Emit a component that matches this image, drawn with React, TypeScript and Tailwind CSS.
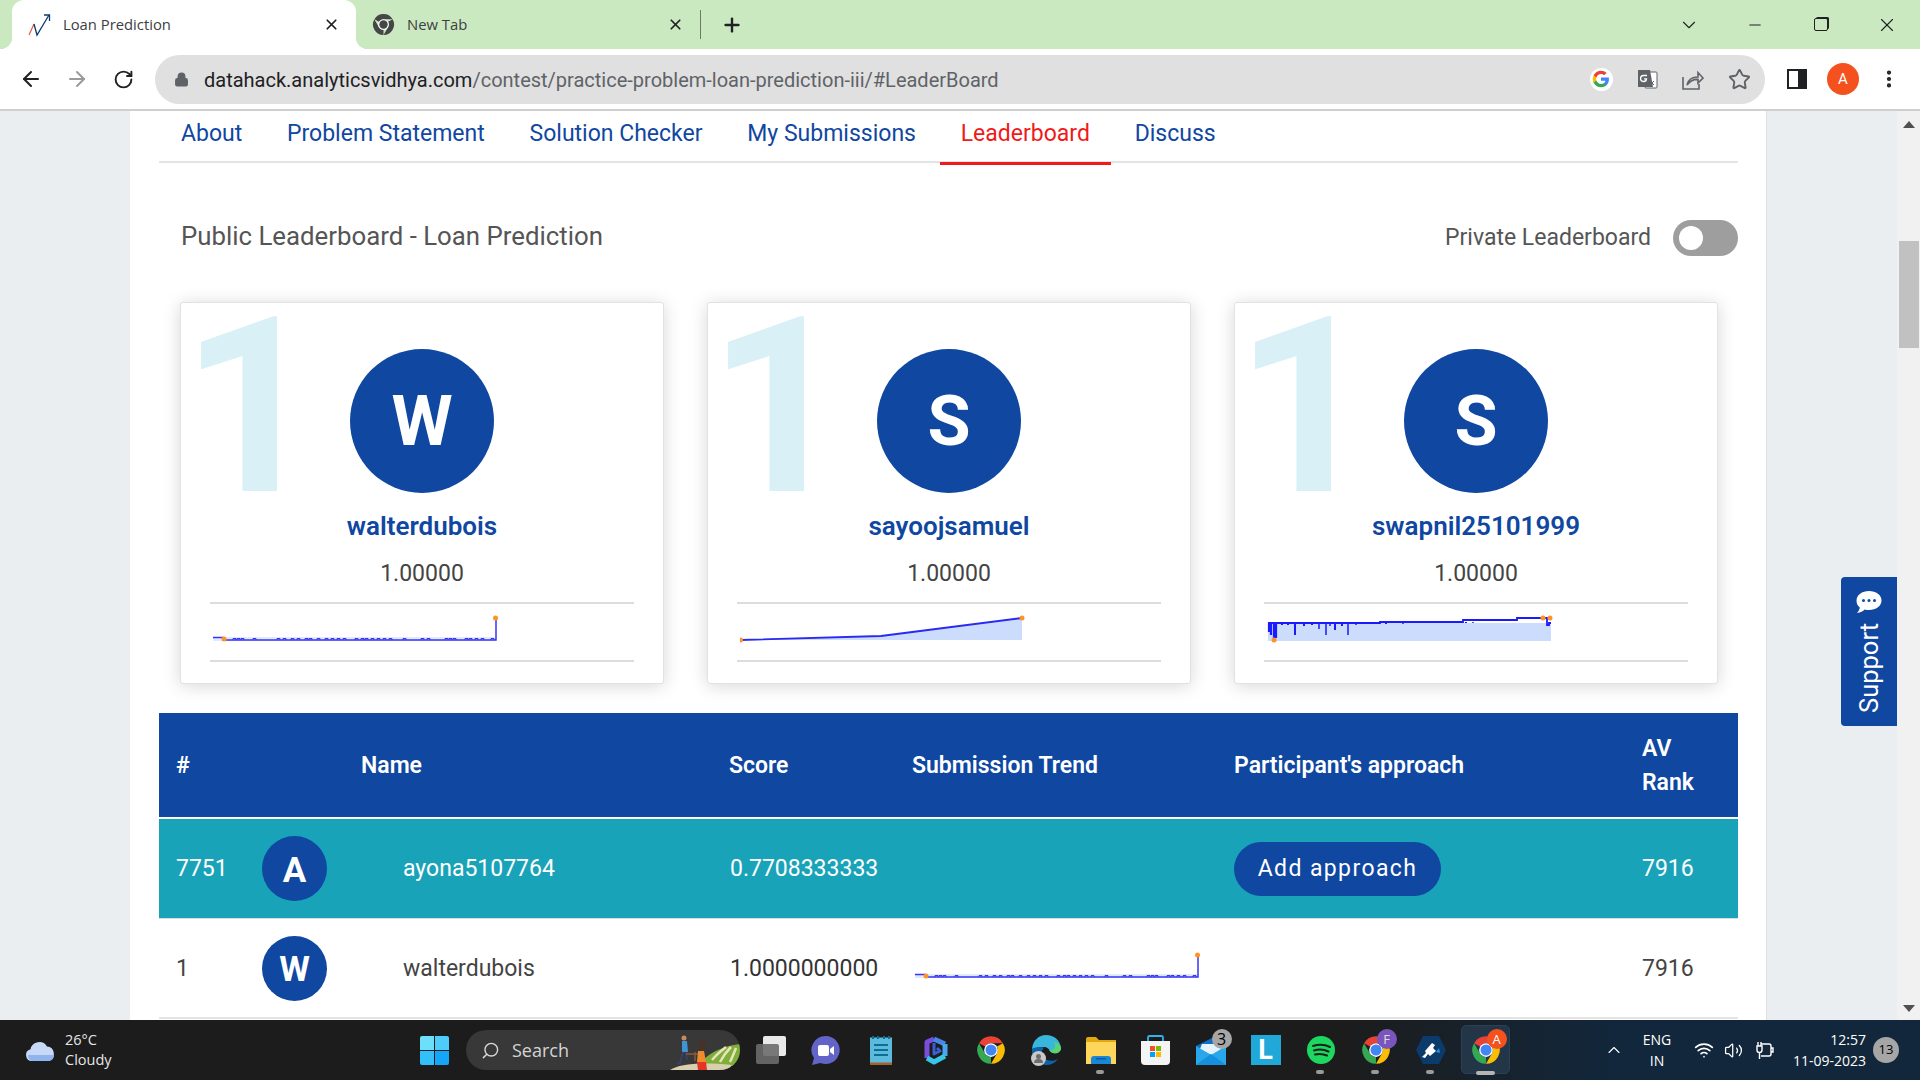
import { ReactNode } from "react";
import {
  ArrowLeft,
  ArrowRight,
  ChevronDown,
  ChevronUp,
  EllipsisVertical,
  Lock,
  Minus,
  Plus,
  RotateCw,
  Search,
  Star,
  Volume2,
  Wifi,
  X,
} from "lucide-react";

const TABS = ["About", "Problem Statement", "Solution Checker", "My Submissions", "Leaderboard", "Discuss"];
const COLS = "grid-cols-[86px_99px_368px_182px_322px_409px_113px]";

const WALTER_TICKS = [20, 24, 28, 40, 64, 70, 78, 84, 92, 96, 104, 112, 118, 124, 130, 142, 148, 152, 158, 164, 170, 176, 190, 208, 214, 232, 236, 240, 252, 256, 262, 268, 278];
const SWAPNIL_SPIKES: [number, number, number][] = [
  [27, 22, 2], [51, 16, 1.5], [58, 22, 1.5], [67, 17, 2], [80, 22, 1.5],
  [14, 12, 2], [20, 12, 2], [36, 13, 2], [44, 12, 2], [62, 13, 1.5], [74, 13, 2], [88, 12, 1.5], [118, 11, 2], [135, 11, 1.5], [198, 9, 2], [205, 9, 1.5],
];

function ChromeLogo({ size = 30, mono }: { size?: number; mono?: string }) {
  const red = "M24 2A22 22 0 0 1 43.05 13H24A11 11 0 0 0 14.47 18.5L4.95 13A22 22 0 0 1 24 2Z";
  return (
    <svg width={size} height={size} viewBox="0 0 48 48">
      <path d={red} fill={mono ?? "#ea4335"} />
      <path d={red} fill={mono ?? "#fbbc04"} transform="rotate(120 24 24)" />
      <path d={red} fill={mono ?? "#34a853"} transform="rotate(240 24 24)" />
      <circle cx="24" cy="24" r="11" fill="#fff" />
      <circle cx="24" cy="24" r="8.8" fill={mono ?? "#4285f4"} />
    </svg>
  );
}

function GoogleG() {
  return (
    <div className="flex h-[23px] w-[23px] items-center justify-center rounded-full bg-white">
      <svg width="18" height="18" viewBox="0 0 24 24">
        <path fill="#4285f4" d="M22.56 12.25c0-.78-.07-1.53-.2-2.25H12v4.26h5.92c-.26 1.37-1.04 2.53-2.21 3.31v2.77h3.57c2.08-1.92 3.28-4.74 3.28-8.09z" />
        <path fill="#34a853" d="M12 23c2.97 0 5.46-.98 7.28-2.66l-3.57-2.77c-.98.66-2.23 1.06-3.71 1.06-2.86 0-5.29-1.93-6.16-4.53H2.18v2.84C3.99 20.53 7.7 23 12 23z" />
        <path fill="#fbbc05" d="M5.84 14.09c-.22-.66-.35-1.36-.35-2.09s.13-1.43.35-2.09V7.07H2.18C1.43 8.55 1 10.22 1 12s.43 3.45 1.18 4.93l2.85-2.22.81-.62z" />
        <path fill="#ea4335" d="M12 5.38c1.62 0 3.06.56 4.21 1.64l3.15-3.15C17.45 2.09 14.97 1 12 1 7.7 1 3.99 3.47 2.18 7.07l3.66 2.84c.87-2.6 3.3-4.53 6.16-4.53z" />
      </svg>
    </div>
  );
}

function TranslateIcon() {
  return (
    <svg width="21" height="21" viewBox="0 0 21 21">
      <rect x="8" y="3" width="12" height="16" rx="1" fill="#fff" stroke="#5f6368" strokeWidth="1" />
      <path d="M1 1h12l3 17H1z" fill="#5f6368" />
      <path d="M10 6.5H6.5a3 3 0 1 0 3 3.4H7" fill="none" stroke="#fff" strokeWidth="1.3" />
      <path d="M13 12l4 4m0-4l-4 4" stroke="#5f6368" strokeWidth="1" />
    </svg>
  );
}

function ShareIcon() {
  return (
    <svg width="22" height="21" viewBox="0 0 22 21" fill="none" stroke="#5f6368" strokeWidth="1.6">
      <path d="M1 8v12h16v-5" />
      <path d="M5 16c1-5 5-8 11-8V3.5L21 9l-5 5v-3.6c-5-.3-8 1.6-11 5.6z" />
    </svg>
  );
}

function TrendLogo() {
  return (
    <svg width="24" height="24" viewBox="0 0 24 24" fill="none">
      <path d="M1 22L6 11" stroke="#e8573f" strokeWidth="1.2" />
      <path d="M6 11L9 22L21 2" stroke="#0f3a6e" strokeWidth="1.3" />
      <path d="M16 2h5.5V8" stroke="#0f3a6e" strokeWidth="1.3" />
    </svg>
  );
}

function WalterChart() {
  return (
    <svg width="286" height="36" viewBox="0 0 286 36" className="block">
      <rect x="0" y="24" width="283" height="4" fill="#cbdcfd" opacity="0.6" />
      <path d="M0 24.5H10V27H283V5" fill="none" stroke="#3b35f2" strokeWidth="1.5" />
      {WALTER_TICKS.map((x) => (
        <path key={x} d={`M${x} 27v-1.5h3v1.5`} fill="none" stroke="#3b35f2" strokeWidth="1" />
      ))}
      <circle cx="11" cy="26" r="2.5" fill="#ff9323" />
      <circle cx="282.5" cy="5" r="2.5" fill="#ff9323" />
    </svg>
  );
}

function SamuelChart() {
  return (
    <svg width="286" height="36" viewBox="0 0 286 36" className="block">
      <path d="M0 27L141 23L282 5V27Z" fill="#cbdcfd" />
      <path d="M0 27L141 23L282 5" fill="none" stroke="#2a2af0" strokeWidth="1.8" />
      <circle cx="0.5" cy="27" r="2.5" fill="#ff9323" />
      <circle cx="282" cy="5" r="2.5" fill="#ff9323" />
    </svg>
  );
}

function SwapnilChart() {
  return (
    <svg width="286" height="36" viewBox="-1 0 286 36" className="block">
      <rect x="0" y="10" width="283" height="18" fill="#cbdcfd" />
      <path d="M0 10H112V9H195V7H249V5H279V12H281V10H283" fill="none" stroke="#1a1aff" strokeWidth="1.8" />
      <path d="M1 10V19M3 10V22M6 10V26M8 10V25" stroke="#1a1aff" strokeWidth="2.2" />
      {SWAPNIL_SPIKES.map(([x, y, w]) => (
        <path key={x} d={`M${x} 10V${y}`} stroke="#1a1aff" strokeWidth={w} />
      ))}
      <circle cx="6" cy="27" r="2.5" fill="#ff9323" />
      <circle cx="275" cy="5" r="2.5" fill="#ff9323" />
      <circle cx="282" cy="5" r="2.5" fill="#ff9323" />
    </svg>
  );
}

function PodiumCard({ initial, name, chart }: { initial: string; name: string; chart: ReactNode }) {
  return (
    <div className="relative flex h-[382px] w-[484px] flex-col items-center rounded-[3px] border border-[#e2e2e2] bg-white pt-[46px] shadow-[0_2px_18px_rgba(0,0,0,0.16)]">
      <span className="absolute left-0 top-[10px] text-[245px] font-bold leading-[190px] text-[#d9f0f7]">1</span>
      <div className="relative flex h-[144px] w-[144px] items-center justify-center rounded-full bg-[#0f47a1] text-[70px] font-bold leading-none text-white">
        {initial}
      </div>
      <div className="mt-[18px] text-[26px] font-semibold leading-[30px] text-[#0f47a1]">{name}</div>
      <div className="mt-[19px] text-[23px] leading-[28px] text-[#444]">1.00000</div>
      <div className="mt-[14px] h-[60px] w-[424px] border-y-2 border-[#dcdcdc] pl-[3px] pt-[9px]">{chart}</div>
    </div>
  );
}

function Avatar({ letter }: { letter: string }) {
  return (
    <div className="flex h-[65px] w-[65px] items-center justify-center rounded-full bg-[#0f47a1] pt-[3px] text-[35px] font-bold leading-none text-white">
      {letter}
    </div>
  );
}

function TaskSlot({ children, dot, active }: { children: ReactNode; dot?: boolean; active?: boolean }) {
  return (
    <div className="relative flex h-[60px] w-[55px] items-center justify-center">
      {active && <div className="absolute left-[3px] top-[5px] h-[49px] w-[49px] rounded-[5px] border border-[#2c4054] bg-[#233648]" />}
      <div className="relative flex items-center justify-center">{children}</div>
      {dot && <div className="absolute bottom-[6px] left-[23px] h-[4px] w-[8px] rounded-full bg-[#9a9a9a]" />}
      {active && <div className="absolute bottom-[5px] left-[18px] h-[4px] w-[19px] rounded-full bg-[#b5b5b5]" />}
    </div>
  );
}

function Badge({ label, className }: { label: string; className: string }) {
  return (
    <div className={`absolute right-[-6px] top-[-6px] flex h-[20px] w-[20px] items-center justify-center rounded-full leading-none ${className}`}>
      {label}
    </div>
  );
}

function Taskbar() {
  return (
    <div className="flex h-[60px] shrink-0 items-center bg-[linear-gradient(90deg,#1c1c1c_0%,#1c1c1c_70%,#12273b_84%,#12273b_100%)] font-['Open_Sans',sans-serif] text-white">
      <div className="flex w-[420px] items-center gap-[9px] pl-[25px]">
        <svg width="31" height="24" viewBox="0 0 31 24">
          <path d="M7 23a6 6 0 0 1-1.5-11.8A9 9 0 0 1 22 8.5a7.5 7.5 0 0 1 2 14.5z" fill="#c7d9f7" />
          <path d="M3 17h26a6 6 0 0 1-5 6H7a6 6 0 0 1-4-6z" fill="#8fb4ee" />
        </svg>
        <div className="text-[14.5px] leading-[20px] text-[#e6e6e6]">
          <div>26°C</div>
          <div>Cloudy</div>
        </div>
      </div>
      <div className="grid h-[29px] w-[29px] grid-cols-2 gap-[1px]">
        <div className="rounded-tl-[2px] bg-[#6ce0fb]" />
        <div className="rounded-tr-[2px] bg-[#4fcdfa]" />
        <div className="rounded-bl-[2px] bg-[#32bffa]" />
        <div className="rounded-br-[2px] bg-[#16a6f8]" />
      </div>
      <div className="relative ml-[17px] flex h-[40px] w-[274px] items-center overflow-hidden rounded-full bg-[#383838] pl-[15px]">
        <Search size={19} strokeWidth={1.8} className="-scale-x-100 text-[#d8d8d8]" />
        <span className="ml-[12px] text-[18px] text-[#d4d4d4]">Search</span>
        <svg width="72" height="40" viewBox="0 0 72 40" className="absolute right-0 top-0">
          <path d="M30 36C38 24 54 16 72 14V36Z" fill="#7fae3c" />
          <path d="M44 30c5-6 9-9 14-13M52 32c3-6 7-11 11-15M62 32c2-4 4-9 6-14" stroke="#e7e4b8" strokeWidth="2.5" fill="none" />
          <path d="M2 40C12 34 30 32 64 35L60 40Z" fill="#d8cfae" />
          <circle cx="16" cy="8" r="2.5" fill="#c98a5c" />
          <path d="M14 11h5l1 11h-6z" fill="#3d94d6" />
          <path d="M15 22l-3 11-3 1M18 22l1 8" stroke="#3b3f6b" strokeWidth="2" fill="none" />
          <path d="M18 24l12 0M27 22v9" stroke="#8a5a3c" strokeWidth="1.5" />
          <circle cx="34" cy="15" r="4" fill="#4a3128" />
          <path d="M30 21h6l2 11h-9z" fill="#f28b2c" />
          <path d="M29 32h9l1 8h-9z" fill="#e53527" />
        </svg>
      </div>
      <div className="ml-[3px] flex">
        <TaskSlot>
          <div className="relative h-[28px] w-[30px]">
            <div className="absolute right-0 top-0 h-[20px] w-[23px] rounded-[2px] bg-[#e9e9e9]" />
            <div className="absolute bottom-0 left-0 h-[20px] w-[23px] rounded-[2px] bg-[#6b6b6b]/90" />
          </div>
        </TaskSlot>
        <TaskSlot>
          <svg width="29" height="29" viewBox="0 0 29 29">
            <path d="M14.5 0a14 14 0 1 1-5 27L1 29l2-7A14 14 0 0 1 14.5 0z" fill="#6264c7" />
            <rect x="7" y="9" width="11" height="11" rx="2" fill="#fff" />
            <path d="M19 13l4-3v9l-4-3z" fill="#fff" />
          </svg>
        </TaskSlot>
        <TaskSlot>
          <svg width="22" height="29" viewBox="0 0 22 29">
            <rect y="1.5" width="22" height="27" fill="#5cbbdc" />
            <rect y="26.5" width="22" height="2.5" fill="#a5602c" />
            <path d="M4 9h14M4 14h14M4 19h14" stroke="#0d6d92" strokeWidth="2" />
            <path d="M3 0v3M8 0v3M14 0v3M19 0v3" stroke="#0d6d92" strokeWidth="2" />
          </svg>
        </TaskSlot>
        <TaskSlot>
          <svg width="26" height="30" viewBox="0 0 26 30" fill="none" strokeWidth="5" strokeLinejoin="round">
            <path d="M4 23V7L11 4" stroke="#7a4ddb" />
            <path d="M11 4l11 5" stroke="#4a86e8" />
            <path d="M22 9V21" stroke="#48a6ea" />
            <path d="M22 21L11 27 4 23" stroke="#38c5e8" />
            <path d="M11 8v11l6-3-3-3" stroke="#3a5fd0" strokeWidth="3" />
          </svg>
        </TaskSlot>
        <TaskSlot>
          <ChromeLogo />
        </TaskSlot>
        <TaskSlot>
          <div className="relative">
            <svg width="30" height="30" viewBox="0 0 30 30">
              <path d="M1 14C2 5 8 0 15 0c8 0 14 5 15 13 0 4-4 6-8 5-4-1-3-5-8-6-5 0-10 1-13 2z" fill="#38b6dc" />
              <path d="M30 13c0 4-4 6-8 5-2-.5-3-2-4-3 5 1 8-3 5-8 4 1 7 3 7 6z" fill="#5bd36f" />
              <path d="M1 14c3-2 8-3 12-1-3 2-3 7 0 10 3 3 9 4 14 1-3 4-7 6-12 6C7 30 0 23 1 14z" fill="#0d62ab" />
            </svg>
            <div className="absolute bottom-[-1px] left-0 h-[15px] w-[15px] rounded-full bg-[#c9c9c9]">
              <div className="mx-auto mt-[3px] h-[5px] w-[5px] rounded-full bg-[#6e6e6e]" />
              <div className="mx-auto h-[4px] w-[9px] rounded-t-full bg-[#6e6e6e]" />
            </div>
          </div>
        </TaskSlot>
        <TaskSlot dot>
          <svg width="30" height="27" viewBox="0 0 30 27">
            <path d="M0 2a2 2 0 0 1 2-2h8l3 3h17v24H0z" fill="#e3a70f" />
            <path d="M0 5h30v22H0z" fill="#ffd65c" />
            <path d="M5 27v-5a3 3 0 0 1 3-3h14a3 3 0 0 1 3 3v5z" fill="#1a86d6" />
            <rect x="10" y="21" width="10" height="1.5" fill="#0d5ba3" />
          </svg>
        </TaskSlot>
        <TaskSlot>
          <svg width="29" height="30" viewBox="0 0 29 30">
            <path d="M7 7V2.5a1.5 1.5 0 0 1 1.5-1.5h12A1.5 1.5 0 0 1 22 2.5V7" fill="none" stroke="#2ab6ee" strokeWidth="1.8" />
            <path d="M0 6h29v20a4 4 0 0 1-4 4H4a4 4 0 0 1-4-4z" fill="#f4f4f4" />
            <rect x="9" y="11" width="5" height="5" fill="#f25022" />
            <rect x="15" y="11" width="5" height="5" fill="#7fba00" />
            <rect x="9" y="17" width="5" height="5" fill="#00a4ef" />
            <rect x="15" y="17" width="5" height="5" fill="#ffb900" />
          </svg>
        </TaskSlot>
        <TaskSlot>
          <div className="relative">
            <svg width="30" height="30" viewBox="0 0 30 30">
              <path d="M0 11L20 1l10 9v20H0z" fill="#0f6fc6" />
              <path d="M6 9h20l3 5-12 7L4 14z" fill="#e4f3fb" />
              <path d="M0 11l15 9 15-9v19H0z" fill="#28a8ea" />
              <path d="M0 30l15-11 15 11z" fill="#1490df" />
            </svg>
            <Badge label="3" className="bg-[#a6a6a6] text-[16px] text-black" />
          </div>
        </TaskSlot>
        <TaskSlot>
          <div className="flex h-[30px] w-[30px] items-center justify-center bg-[#20a8d8] font-['Roboto',sans-serif] text-[27px] font-bold leading-none text-white">
            L
          </div>
        </TaskSlot>
        <TaskSlot dot>
          <svg width="28" height="28" viewBox="0 0 28 28">
            <circle cx="14" cy="14" r="14" fill="#1ed760" />
            <path d="M6 10c6-2 12-1.5 17 1M7 14.5c5-1.5 10-1 14.5 1M8 18.5c4-1 8-.8 12 1" fill="none" stroke="#14241a" strokeWidth="2" strokeLinecap="round" />
          </svg>
        </TaskSlot>
        <TaskSlot dot>
          <div className="relative">
            <ChromeLogo />
            <Badge label="F" className="bg-[#7a55bd] text-[13px] text-[#ddd]" />
          </div>
        </TaskSlot>
        <TaskSlot dot>
          <svg width="30" height="28" viewBox="0 0 30 28">
            <path d="M7 0h16l7 14-7 14H7L0 14z" fill="#0b3a6b" />
            <path d="M6 21l4-4-1-2 7-8 3 2-2 3 3 3-6 5-2-2-3 4z" fill="#fff" />
            <path d="M20 16l3-4 1 5z" fill="#2f8fd8" />
          </svg>
        </TaskSlot>
        <TaskSlot active>
          <div className="relative">
            <ChromeLogo />
            <Badge label="A" className="bg-[#f4511e] text-[13px] text-white" />
          </div>
        </TaskSlot>
      </div>
      <div className="ml-auto flex items-center pr-[21px]">
        <div className="flex w-[28px] justify-center">
          <ChevronUp size={20} strokeWidth={1.3} />
        </div>
        <div className="w-[58px] text-center text-[14px] leading-[21px]">
          <div>ENG</div>
          <div>IN</div>
        </div>
        <div className="flex w-[36px] justify-center">
          <Wifi size={20} strokeWidth={2} />
        </div>
        <div className="flex w-[22px] justify-center">
          <Volume2 size={19} strokeWidth={1.6} />
        </div>
        <div className="flex w-[40px] justify-center">
          <svg width="20" height="20" viewBox="0 0 20 20" fill="none" stroke="#fff" strokeWidth="1.4">
            <path d="M7 4h8a2 2 0 0 1 2 2v8a2 2 0 0 1-2 2H7" />
            <path d="M17 8h2v4h-2" />
            <path d="M3 6h5v4a2.5 2.5 0 0 1-5 0zM4 6V2M7 6V2M5.5 12.5V19" />
          </svg>
        </div>
        <div className="w-[82px] text-right text-[14px] leading-[21px]">
          <div>12:57</div>
          <div>11-09-2023</div>
        </div>
        <div className="ml-[7px] flex h-[26px] w-[26px] items-center justify-center rounded-full bg-[#a6a6a6] text-[13px] text-black">
          13
        </div>
      </div>
    </div>
  );
}

function BrowserChrome() {
  return (
    <>
      <div className="flex h-[49px] shrink-0 items-center bg-[#cbe9c0] font-['Open_Sans',sans-serif] text-[14.8px] text-[#3c4043]">
        <div className="relative ml-[12px] flex h-[49px] w-[344px] items-center rounded-t-[12px] bg-white pl-[16px] pr-[16px]">
          <div className="absolute bottom-0 left-[-12px] h-[12px] w-[12px] bg-[radial-gradient(circle_at_0_0,#cbe9c0_12px,#fff_12.5px)]" />
          <div className="absolute bottom-0 right-[-12px] h-[12px] w-[12px] bg-[radial-gradient(circle_at_100%_0,#cbe9c0_12px,#fff_12.5px)]" />
          <TrendLogo />
          <span className="ml-[11px] flex-1">Loan Prediction</span>
          <X size={17} strokeWidth={2.4} className="text-[#202124]" />
        </div>
        <div className="flex h-[49px] w-[344px] items-center pl-[16px] pr-[16px]">
          <ChromeLogo size={23} mono="#454746" />
          <span className="ml-[12px] flex-1">New Tab</span>
          <X size={17} strokeWidth={2.4} className="text-[#202124]" />
        </div>
        <div className="h-[29px] w-px bg-[#6b7b66]" />
        <Plus size={22} strokeWidth={2.6} className="ml-[20px] text-[#202124]" />
        <ChevronDown size={22} strokeWidth={1.2} className="ml-[935px] text-[#202124]" />
        <Minus size={18} strokeWidth={1.4} className="ml-[46px] text-[#202124]" />
        <div className="relative ml-[50px] h-[13px] w-[14px] rounded-[2px] border-[1.5px] border-[#202124] bg-[#cbe9c0] shadow-[1.5px_-1.5px_0_-0.5px_#202124]" />
        <X size={22} strokeWidth={1.2} className="ml-[48px] text-[#202124]" />
      </div>
      <div className="flex h-[62px] shrink-0 items-center border-b-2 border-[#cfcfcf] bg-white">
        <ArrowLeft size={24} strokeWidth={2} className="ml-[19px] text-[#202124]" />
        <ArrowRight size={24} strokeWidth={2} className="ml-[22px] text-[#9a9a9a]" />
        <RotateCw size={21} strokeWidth={2.2} className="ml-[24px] text-[#202124]" />
        <div className="ml-[21px] flex h-[49px] w-[1610px] items-center rounded-full bg-[#e0e0e0] pl-[19px] font-['Roboto',sans-serif] text-[20px]">
          <Lock size={15} strokeWidth={2.6} fill="#5f6368" className="text-[#5f6368]" />
          <span className="ml-[15px] pt-[2px] text-[#202124]">datahack.analyticsvidhya.com</span>
          <span className="pt-[2px] text-[#5f6368]">/contest/practice-problem-loan-prediction-iii/#LeaderBoard</span>
          <div className="ml-auto flex items-center pr-[3px]">
            <div className="flex w-[46px] justify-center"><GoogleG /></div>
            <div className="flex w-[46px] justify-center"><TranslateIcon /></div>
            <div className="flex w-[46px] justify-center"><ShareIcon /></div>
            <div className="flex w-[46px] justify-center"><Star size={23} strokeWidth={2} className="text-[#5f6368]" /></div>
          </div>
        </div>
        <div className="ml-[22px] flex h-[20px] w-[20px] justify-end border-[2px] border-[#202124] bg-white">
          <div className="h-full w-[7px] bg-[#202124]" />
        </div>
        <div className="ml-[20px] flex h-[32px] w-[32px] items-center justify-center rounded-full bg-[#f4511e] font-['Roboto',sans-serif] text-[15px] text-white">
          A
        </div>
        <EllipsisVertical size={22} strokeWidth={2.6} className="ml-[19px] text-[#202124]" />
      </div>
    </>
  );
}

export default function App() {
  return (
    <div className="flex h-screen w-full flex-col overflow-hidden font-['Roboto',sans-serif]">
      <BrowserChrome />
      <div className="relative flex min-h-0 flex-1 overflow-hidden bg-[#ebeef1]">
        <div className="min-w-0 flex-1 overflow-hidden">
          <main className="mx-auto h-[1200px] w-[1637px] border-r border-[#dfe2e5] bg-white pl-[29px] pr-[28px]">
            <nav className="flex h-[52px] items-start border-b-2 border-[#e3e3e3] pl-[1px]">
              {TABS.map((t) => (
                <div
                  key={t}
                  className={
                    t === "Leaderboard"
                      ? "mr-[2.75px] h-[54px] border-b-[3px] border-[#f01a1a] px-[21px] pt-[5px] text-[23px] leading-[36px] text-[#f01a1a]"
                      : "mr-[2.75px] h-[50px] px-[21px] pt-[5px] text-[23px] leading-[36px] text-[#0f47a1]"
                  }
                >
                  {t}
                </div>
              ))}
            </nav>
            <div className="mt-[57px] flex h-[36px] items-center justify-between pl-[22px]">
              <h1 className="pb-[4px] text-[25.8px] font-normal text-[#555]">Public Leaderboard - Loan Prediction</h1>
              <div className="flex items-center gap-[22px]">
                <span className="text-[23px] text-[#555]">Private Leaderboard</span>
                <div className="flex h-[36px] w-[65px] items-center rounded-full bg-[#9e9e9e] pl-[6px]">
                  <div className="h-[24px] w-[24px] rounded-full bg-white" />
                </div>
              </div>
            </div>
            <div className="mt-[46px] flex gap-[43px] pl-[21px]">
              <PodiumCard initial="W" name="walterdubois" chart={<WalterChart />} />
              <PodiumCard initial="S" name="sayoojsamuel" chart={<SamuelChart />} />
              <PodiumCard initial="S" name="swapnil25101999" chart={<SwapnilChart />} />
            </div>
            <section className="mt-[29px]">
              <div className={`grid h-[104px] ${COLS} items-center bg-[#0f47a1] pt-[1px] text-[23px] font-semibold leading-[34px] text-white`}>
                <div className="col-span-2 pl-[17px]">#</div>
                <div className="pl-[17px]">Name</div>
                <div className="pl-[17px]">Score</div>
                <div className="pl-[18px]">Submission Trend</div>
                <div className="pl-[18px]">Participant's approach</div>
                <div className="pl-[17px]">AV<br />Rank</div>
              </div>
              <div className={`mt-[2px] grid h-[100px] ${COLS} items-center border-b border-[#dcdcdc] bg-[#19a3b9] text-[23px] text-white`}>
                <div className="pl-[17px] pt-[2px]">7751</div>
                <div className="pl-[17px]"><Avatar letter="A" /></div>
                <div className="pl-[59px] pt-[2px]">ayona5107764</div>
                <div className="pl-[18px] pt-[2px]">0.7708333333</div>
                <div />
                <div className="pl-[18px]">
                  <div className="flex h-[54px] w-[207px] items-center justify-center rounded-full bg-[#0f47a1] pt-[2px] font-normal tracking-[1.4px]">Add approach</div>
                </div>
                <div className="pl-[17px] pt-[2px]">7916</div>
              </div>
              <div className={`grid h-[100px] ${COLS} items-center border-b-2 border-[#e3e3e3] bg-white text-[23px] text-[#444]`}>
                <div className="pl-[17px] pt-[2px]">1</div>
                <div className="pl-[17px]"><Avatar letter="W" /></div>
                <div className="pl-[59px] pt-[2px]">walterdubois</div>
                <div className="pl-[18px] pt-[2px] text-[#333]">1.0000000000</div>
                <div className="pl-[21px]"><WalterChart /></div>
                <div />
                <div className="pl-[17px] pt-[2px]">7916</div>
              </div>
            </section>
          </main>
        </div>
        <div className="relative w-[23px] shrink-0 bg-[#f1f1f1]">
          <div className="absolute left-[6px] top-[10px] h-0 w-0 border-x-[6px] border-b-[7px] border-x-transparent border-b-[#505050]" />
          <div className="absolute left-[2px] top-[130px] h-[107px] w-[20px] bg-[#c1c1c1]" />
          <div className="absolute bottom-[8px] left-[6px] h-0 w-0 border-x-[6px] border-t-[7px] border-x-transparent border-t-[#505050]" />
        </div>
        <div className="absolute right-[23px] top-[466px] flex h-[149px] w-[56px] flex-col items-center gap-[9px] rounded-l-[4px] bg-[#0f47a1] pt-[13px] text-white">
          <svg width="28" height="24" viewBox="0 0 27 24">
            <path d="M13.5 1C20.5 1 26 5 26 10.5S20.5 20 13.5 20c-1.5 0-3-.2-4.3-.6C7.5 21 5 22.5 1.5 23c1.5-1.5 2.5-3.5 2.8-5.5C2 15.8 1 13.3 1 10.5 1 5 6.5 1 13.5 1z" fill="#fff" />
            <circle cx="8" cy="10.5" r="1.5" fill="#0f47a1" />
            <circle cx="13.5" cy="10.5" r="1.5" fill="#0f47a1" />
            <circle cx="19" cy="10.5" r="1.5" fill="#0f47a1" />
          </svg>
          <span className="rotate-180 text-[25.5px] leading-[28px] [writing-mode:vertical-rl]">Support</span>
        </div>
      </div>
      <Taskbar />
    </div>
  );
}
